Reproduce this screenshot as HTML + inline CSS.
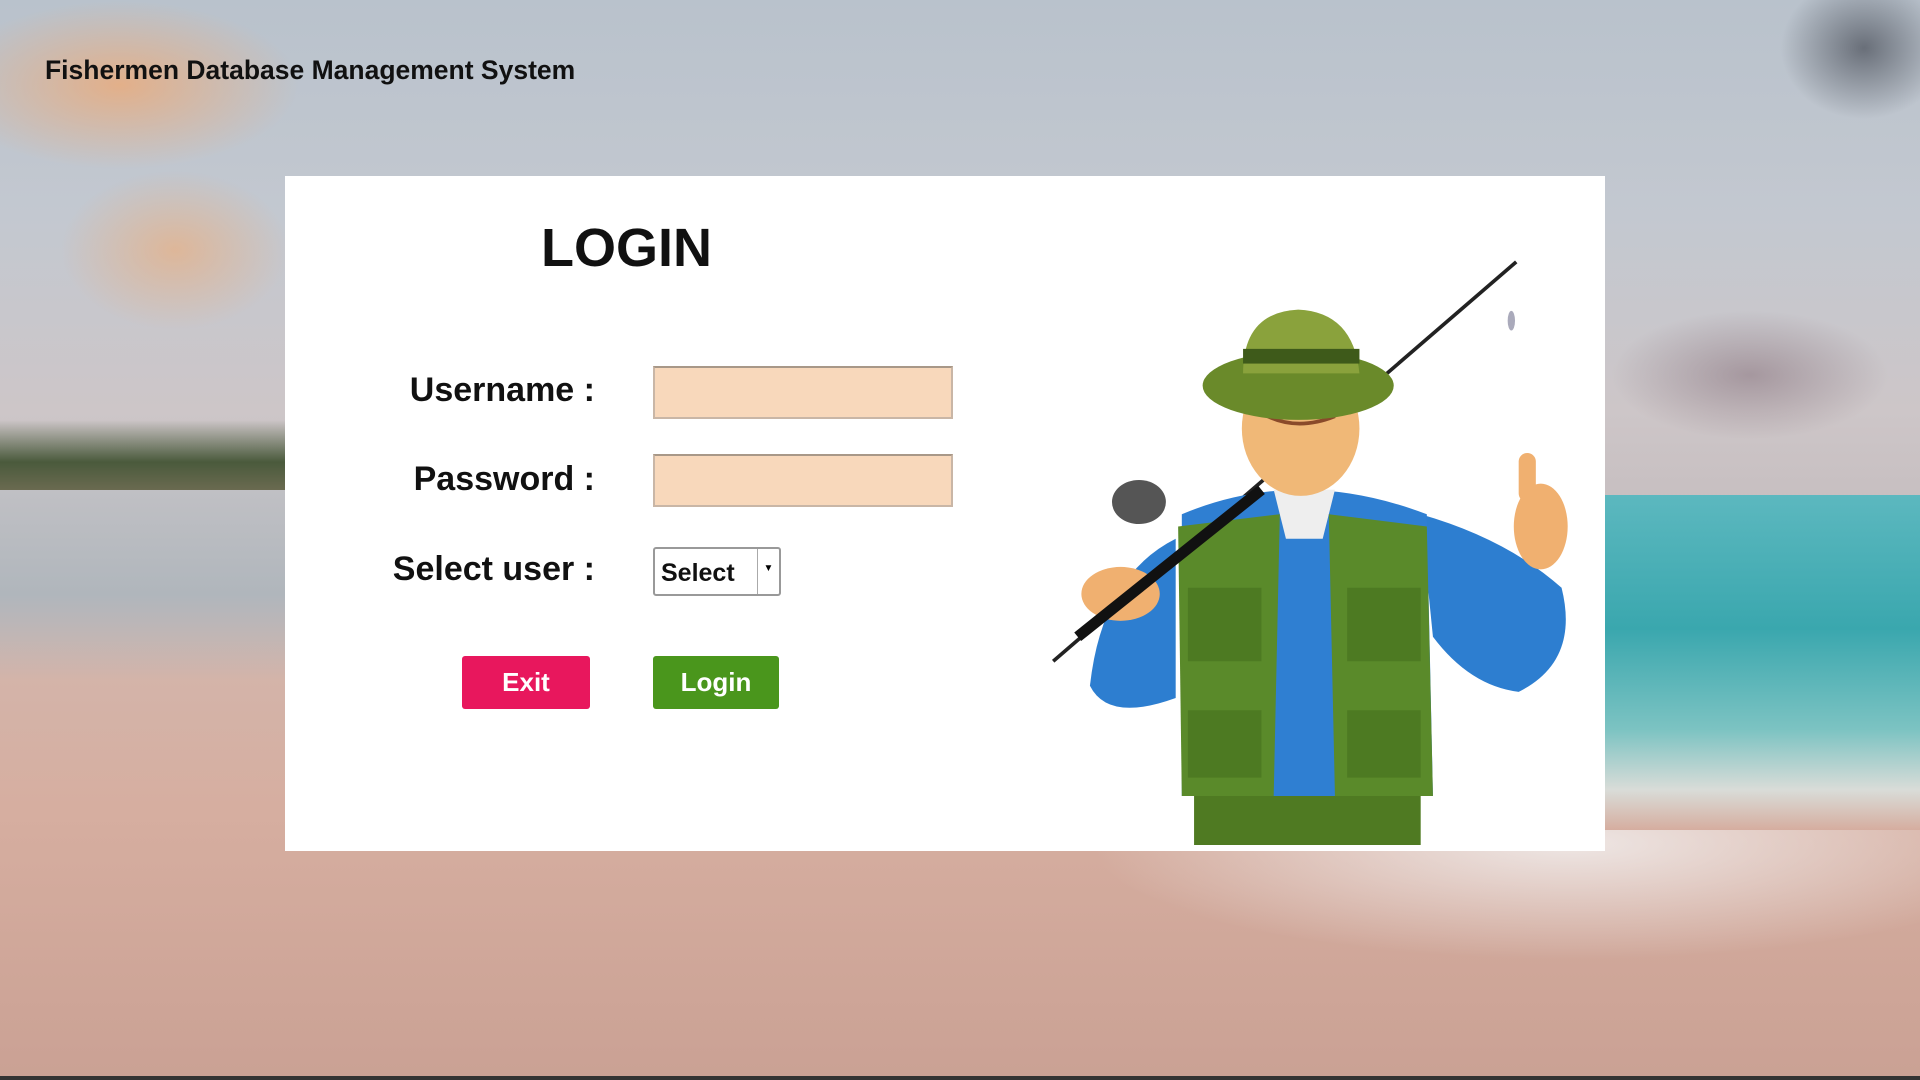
<!DOCTYPE html>
<html><head><meta charset="utf-8"><style>
*{margin:0;padding:0;box-sizing:border-box}
body{width:1920px;height:1080px;overflow:hidden;position:relative;font-family:"Liberation Sans",sans-serif;
background:linear-gradient(180deg,#b9c2cc 0%,#c3c8d0 20%,#cdc6c8 38%,#c8c0c2 45%,#d3b5ab 60%,#d6aea0 75%,#caa194 100%)}
.abs{position:absolute}
.panel{left:285px;top:176px;width:1320px;height:675px;background:#fff}
.lbl{font-weight:bold;font-size:34px;color:#111;text-align:right;width:320px;left:275px}
.inp{left:653px;width:300px;height:53px;background:#f8d8bb;border:2px solid #c9b6a6;border-top-color:#a89888}
.btn{top:656px;height:53px;color:#fff;font-weight:bold;font-size:26px;text-align:center;line-height:53px;border-radius:3px}
</style></head><body>
<div class="abs" style="left:0;top:0;width:300px;height:170px;background:radial-gradient(ellipse at 40% 50%,rgba(236,170,120,.8),rgba(236,170,120,0) 70%)"></div>
<div class="abs" style="left:60px;top:170px;width:230px;height:160px;background:radial-gradient(ellipse at 50% 50%,rgba(232,175,130,.7),rgba(232,175,130,0) 70%)"></div>
<div class="abs" style="left:1780px;top:0;width:140px;height:120px;background:radial-gradient(ellipse at 60% 40%,rgba(70,75,85,.7),rgba(70,75,85,0) 70%)"></div>
<div class="abs" style="left:1610px;top:310px;width:280px;height:130px;background:radial-gradient(ellipse at 50% 50%,rgba(140,120,130,.6),rgba(140,120,130,0) 70%)"></div>
<div class="abs" style="left:0;top:420px;width:285px;height:70px;background:linear-gradient(180deg,rgba(60,80,50,0),#4a5a3c 60%,#6a6a50)"></div>
<div class="abs" style="left:0;top:490px;width:285px;height:190px;background:linear-gradient(180deg,#c0c0c4,#b0b6bc 55%,rgba(210,180,170,0))"></div>
<div class="abs" style="left:1605px;top:495px;width:315px;height:335px;background:linear-gradient(180deg,#5cb8bf 0%,#3aa7ae 40%,#7cc3c2 70%,#d9dcd8 88%,rgba(214,174,160,0))"></div>
<div class="abs" style="left:1050px;top:830px;width:870px;height:140px;background:radial-gradient(ellipse at 60% 10%,rgba(242,240,240,.85),rgba(220,200,195,0) 65%)"></div>
<div class="abs" style="left:0;top:1076px;width:1920px;height:4px;background:#333"></div>

<div class="abs" style="left:45px;top:55px;font-size:26.5px;font-weight:bold;color:#111">Fishermen Database Management System</div>

<div class="abs panel"></div>
<div class="abs" style="left:541px;top:217px;font-size:54px;font-weight:bold;color:#111">LOGIN</div>
<div class="abs lbl" style="top:371px">Username :</div>
<div class="abs lbl" style="top:460px">Password :</div>
<div class="abs lbl" style="top:550px">Select user :</div>
<div class="abs inp" style="top:366px"></div>
<div class="abs inp" style="top:454px"></div>
<div class="abs" style="left:653px;top:547px;width:128px;height:49px;border:2px solid #999;background:#fff;border-radius:3px">
 <span style="position:absolute;left:6px;top:10px;font-size:25px;font-weight:bold;color:#111">Select</span>
 <div style="position:absolute;right:0;top:0;width:22px;height:45px;border-left:1px solid #aaa;font-size:10px;text-align:center;line-height:40px">▼</div>
</div>
<div class="abs btn" style="left:462px;width:128px;background:#e8175d">Exit</div>
<div class="abs btn" style="left:653px;width:126px;background:#4a961c">Login</div>

<svg class="abs" style="left:1047px;top:257px" width="533" height="588" viewBox="855 210 435 480">
 <line x1="860" y1="540" x2="1238" y2="214" stroke="#222" stroke-width="3"/>
 <ellipse cx="1234" cy="262" rx="3" ry="8" fill="#aab"/>
 <rect x="975" y="600" width="185" height="90" fill="#4f7a22"/>
 <path d="M960 440 Q900 470 890 560 Q905 590 960 570 Z" fill="#2d7ed0"/>
 <path d="M1160 420 Q1230 440 1275 480 Q1290 540 1240 565 Q1200 560 1170 520 Z" fill="#2d7ed0"/>
 <path d="M965 420 Q1060 380 1165 420 L1170 650 L965 650 Z" fill="#2f7fd2"/>
 <path d="M1040 400 L1090 400 L1080 440 L1050 440 Z" fill="#eee"/>
 <path d="M962 430 L1045 420 L1040 650 L965 650 Z" fill="#5a8a2a"/>
 <path d="M1085 420 L1165 430 L1170 650 L1090 650 Z" fill="#5a8a2a"/>
 <rect x="970" y="480" width="60" height="60" fill="#4d7a22"/>
 <rect x="1100" y="480" width="60" height="60" fill="#4d7a22"/>
 <rect x="970" y="580" width="60" height="55" fill="#4d7a22"/>
 <rect x="1100" y="580" width="60" height="55" fill="#4d7a22"/>
 <ellipse cx="1062" cy="350" rx="48" ry="55" fill="#f0b877"/>
 <path d="M1035 340 Q1060 352 1090 340" stroke="#8a4a2a" stroke-width="3" fill="none"/>
 <ellipse cx="1060" cy="315" rx="78" ry="28" fill="#6a8a2a"/>
 <path d="M1015 305 Q1015 255 1060 253 Q1105 255 1110 305 Z" fill="#8aa23c"/>
 <rect x="1015" y="285" width="95" height="12" fill="#3e5a1a"/>
 <ellipse cx="915" cy="485" rx="32" ry="22" fill="#f0b070"/>
 <ellipse cx="1258" cy="430" rx="22" ry="35" fill="#f0b070"/>
 <rect x="1240" y="370" width="14" height="40" rx="7" fill="#f0b070"/>
 <ellipse cx="930" cy="410" rx="22" ry="18" fill="#555"/>
 <line x1="880" y1="520" x2="1030" y2="400" stroke="#111" stroke-width="9"/>
</svg>
</body></html>
